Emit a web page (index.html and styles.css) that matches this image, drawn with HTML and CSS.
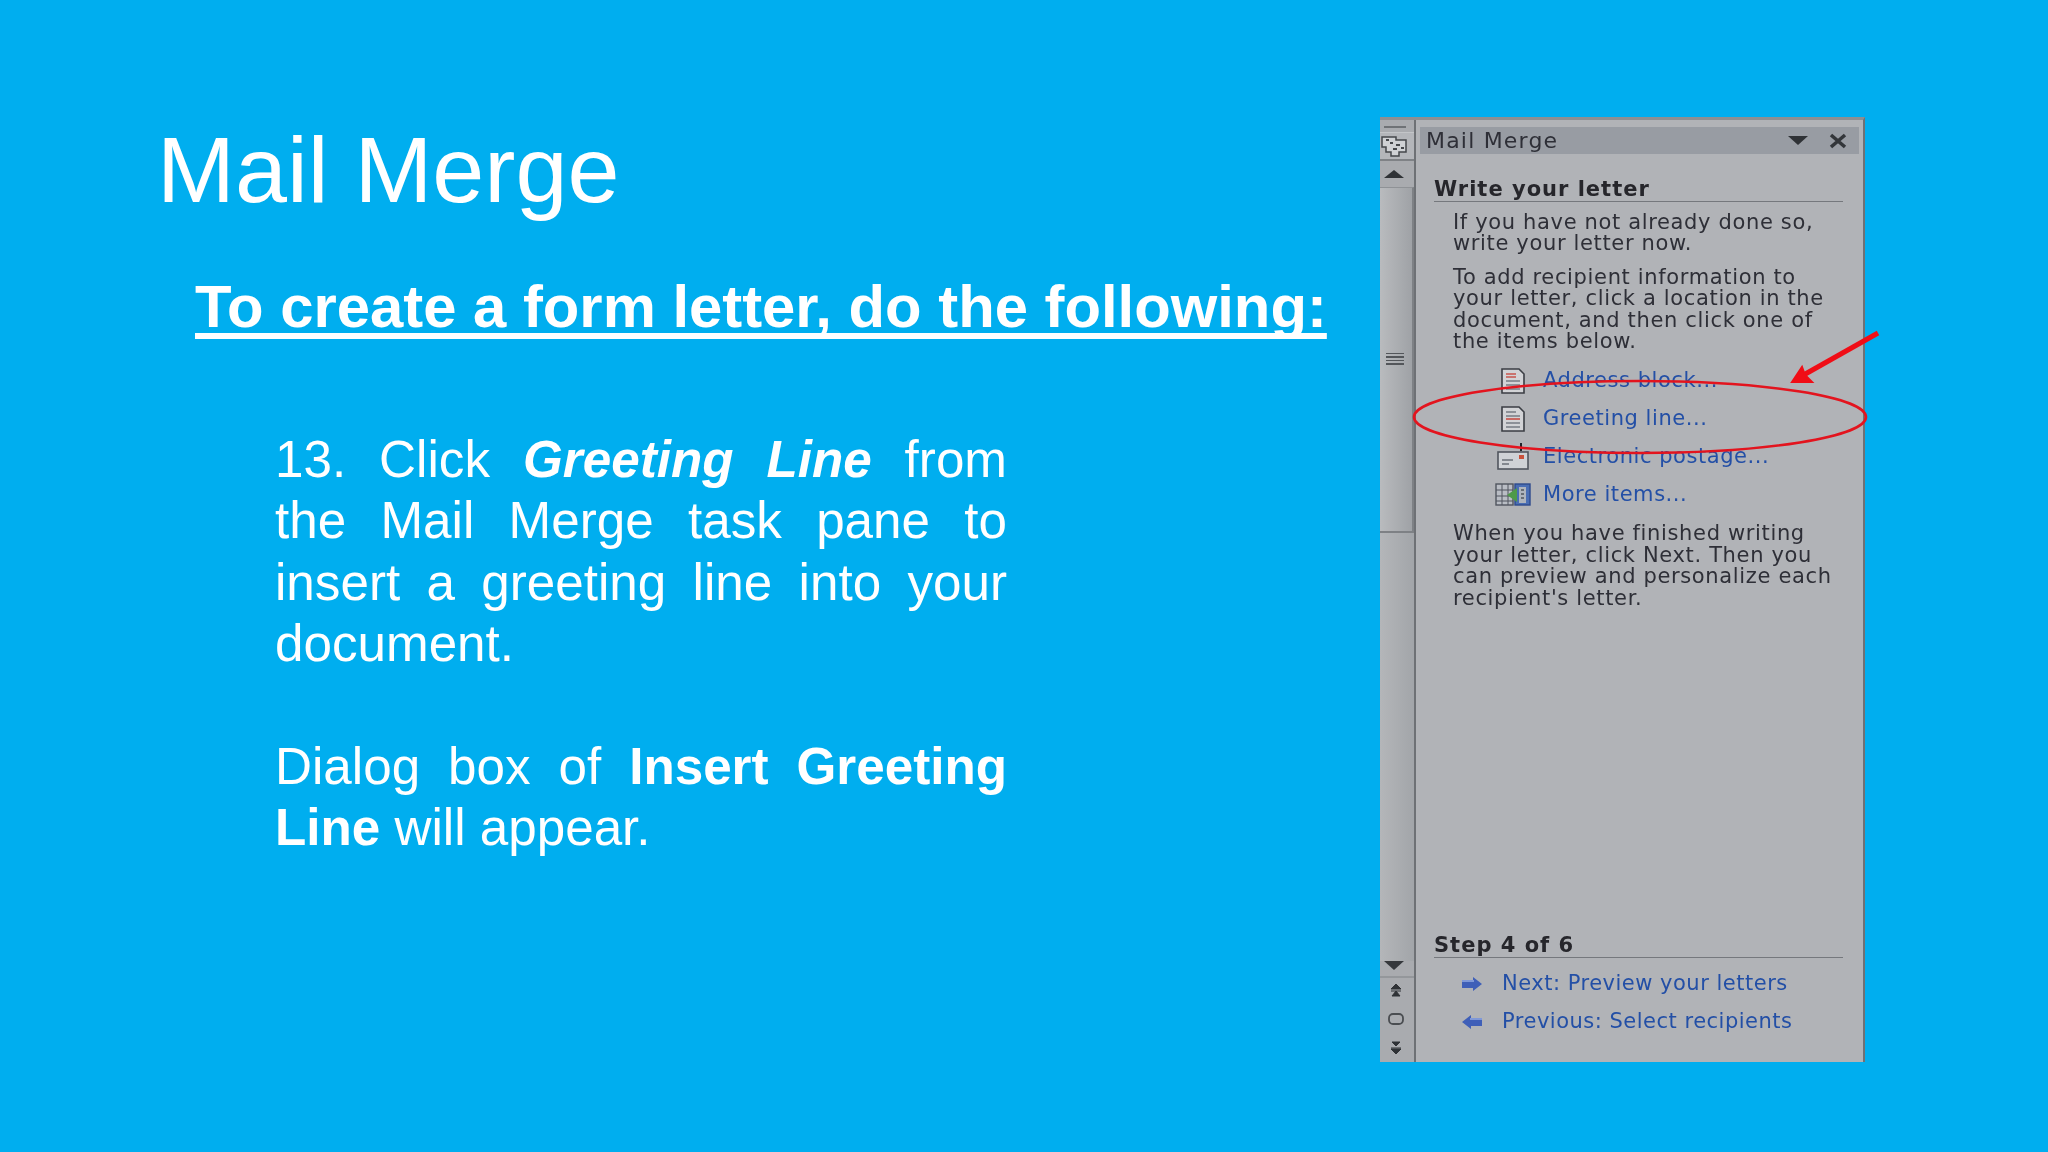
FILE: index.html
```html
<!DOCTYPE html>
<html lang="en">
<head>
	<meta charset="UTF-8">
	<title>Mail Merge</title>
	<link rel="stylesheet" href="styles.css">
</head>
<body>
	<div class="slide">
		<div class="copy">
			<h1>Mail Merge</h1>
			<h2>To create a form letter, do the following:</h2>
			<p class="step">13. Click <b><i>Greeting Line</i></b> from the Mail Merge task pane to insert a greeting line into your document.</p>
			<p class="step step-2">Dialog box of <b>Insert Greeting Line</b> will appear.</p>
		</div>

		<div class="pane">
			<div class="strip">
				<div class="grip"></div>
				<div class="tool">
					<svg width="30" height="24" viewBox="0 0 30 24">
						<path d="M2 3h14v3h10v12h-7v4h-8v-4H6v-5H2z" fill="#cfd1d4" stroke="#44474b" stroke-width="1.5"/>
						<path d="M6 6h3M10 9h3M16 11h4M13 15h4M21 14h3" stroke="#44474b" stroke-width="1.8"/>
					</svg>
				</div>
				<div class="tri tri-up"></div>
				<div class="thumb">
					<div class="thumb-lines"></div>
				</div>
				<div class="strip-fill"></div>
				<div class="tri tri-down"></div>
				<div class="strip-btns">
					<svg width="16" height="14" viewBox="0 0 16 14"><path d="M8 1l5 5H3zM3 8h10M8 8l4 5H4z" fill="#2f3236" stroke="#2f3236"/></svg>
					<svg width="18" height="14" viewBox="0 0 18 14"><rect x="2" y="2" width="14" height="10" rx="4" fill="none" stroke="#4a4d51" stroke-width="1.8"/></svg>
					<svg width="16" height="14" viewBox="0 0 16 14"><path d="M4 1h8L8 5zM3 7h10M3 8l5 5 5-5z" fill="#2f3236" stroke="#2f3236"/></svg>
				</div>
			</div>

			<div class="main">
				<div class="titlebar">
					<span>Mail Merge</span>
					<div class="tri tri-title"></div>
					<svg class="close" width="20" height="16" viewBox="0 0 20 16"><path d="M3 2l14 12M17 2L3 14" stroke="#33363a" stroke-width="3.6"/></svg>
				</div>

				<div class="section">
					<h3>Write your letter</h3>
					<p class="first">If you have not already done so, write your letter now.</p>
					<p>To add recipient information to your letter, click a location in the document, and then click one of the items below.</p>
					<ul class="items">
						<li>
							<svg width="28" height="26" viewBox="0 0 28 26">
								<path d="M3 1h17l5 5v19H3z" fill="#d2d3d6" stroke="#3b3e44" stroke-width="1.6"/>
								<path d="M7 6h10M7 9h10" stroke="#c8554d" stroke-width="1.5"/>
								<path d="M7 13h14M7 17h14M7 21h14" stroke="#777c84" stroke-width="1.5"/>
							</svg>
							<a>Address block...</a>
						</li>
						<li>
							<svg width="28" height="26" viewBox="0 0 28 26">
								<path d="M3 1h17l5 5v19H3z" fill="#d2d3d6" stroke="#3b3e44" stroke-width="1.6"/>
								<path d="M7 6h10M7 10h14" stroke="#777c84" stroke-width="1.5"/>
								<path d="M7 13h14" stroke="#c8554d" stroke-width="1.7"/>
								<path d="M7 17h14M7 21h14" stroke="#777c84" stroke-width="1.5"/>
							</svg>
							<a>Greeting line...</a>
						</li>
						<li>
							<svg width="32" height="28" viewBox="0 0 32 28">
								<path d="M24 0v8" stroke="#20232a" stroke-width="2"/>
								<rect x="1" y="9" width="30" height="17" fill="#cfd2d6" stroke="#50555e" stroke-width="1.6"/>
								<rect x="22" y="12" width="5" height="4" fill="#c9503a"/>
								<path d="M5 17h11M5 21h7" stroke="#6b7078" stroke-width="1.6"/>
							</svg>
							<a>Electronic postage...</a>
						</li>
						<li>
							<svg width="36" height="24" viewBox="0 0 36 24">
								<rect x="1" y="1" width="17" height="21" fill="#b9bdc4" stroke="#50555e" stroke-width="1.4"/>
								<path d="M1 7h17M1 13h17M1 18h17M7 1v21M13 1v21" stroke="#50555e"/>
								<rect x="20" y="1" width="15" height="21" fill="#4a6eb4" stroke="#2e4a8c" stroke-width="1.4"/>
								<rect x="24" y="4" width="7" height="16" fill="#aeb4bd"/>
								<path d="M26 7h3M26 11h3M26 15h3" stroke="#50555e" stroke-width="1.4"/>
								<path d="M22 5L12 12l10 7z" fill="#4e9a48"/>
							</svg>
							<a>More items...</a>
						</li>
					</ul>
					<p>When you have finished writing your letter, click Next. Then you can preview and personalize each recipient's letter.</p>
				</div>

				<div class="section">
					<h3>Step 4 of 6</h3>
					<div class="nav">
						<svg width="22" height="16" viewBox="0 0 22 16"><path d="M1 4h11V1l9 7-9 7v-3H1z" fill="#3f5fb8"/><path d="M1 5h12" stroke="#7f98d8" stroke-width="2"/></svg>
						<a>Next: Preview your letters</a>
					</div>
					<div class="nav">
						<svg width="22" height="16" viewBox="0 0 22 16"><path d="M21 4H10V1L1 8l9 7v-3h11z" fill="#3f5fb8"/><path d="M21 5H9" stroke="#7f98d8" stroke-width="2"/></svg>
						<a>Previous: Select recipients</a>
					</div>
				</div>
			</div>
		</div>

		<svg class="marks" width="500" height="150" viewBox="0 0 500 150">
			<ellipse cx="240" cy="97" rx="226" ry="36" fill="none" stroke="#e3141e" stroke-width="2.6"/>
			<path d="M478 13L400 57" stroke="#f00d16" stroke-width="5"/>
			<path d="M392 62l10-15 3 8 7 7z" fill="#f00d16" stroke="#f00d16" stroke-width="2"/>
		</svg>
	</div>
</body>
</html>
```

FILE: styles.css
```css
body,h1,h2,h3,p,ul,li{
	margin:0;
	padding:0;
}
ul{
	list-style-type:none;
}
body{
	background:#00aeef;
	font-family:"Liberation Sans",Arial,sans-serif;
}
.slide{
	position:relative;
	display:flex;
	width:2048px;
	height:1152px;
	overflow:hidden;
	background:#00aeef;
	color:#fff;
}

/* left side */
.copy{
	width:1380px;
	flex:none;
	padding:116px 0 0 157px;
	box-sizing:border-box;
}
h1{
	font-size:93.5px;
	font-weight:400;
	line-height:107px;
}
h2{
	margin:49px 0 0 38px;
	font-size:59.8px;
	font-weight:700;
	line-height:69px;
	white-space:nowrap;
	text-decoration:underline;
	text-decoration-thickness:6px;
	text-underline-offset:6px;
	text-decoration-skip-ink:none;
}
.step{
	width:732px;
	margin:88px 0 0 118px;
	font-size:51.2px;
	line-height:61.4px;
	text-align:justify;
}
.step-2{
	margin-top:61px;
}

/* task pane */
.pane{
	display:flex;
	width:485px;
	height:945px;
	margin-top:117px;
	flex:none;
	box-sizing:border-box;
	border-top:3px solid #8c8f92;
	border-right:2px solid #6e7175;
	background:#b1b3b7;
	color:#2e2f37;
	font-family:"DejaVu Sans",Verdana,sans-serif;
	font-size:21px;
	line-height:21.5px;
	filter:blur(.5px);
}
.strip{
	display:flex;
	flex-direction:column;
	width:34px;
	flex:none;
	border-right:2px solid #6e7175;
	background:#a9abaf;
}
.grip{
	height:2px;
	margin:6px 8px 0 4px;
	background:#6f7276;
}
.tool{
	height:29px;
	margin-top:4px;
	padding-top:1px;
	box-sizing:border-box;
	border-top:1px solid #c3c5c8;
	border-bottom:2px solid #7f8286;
	background:#b4b6ba;
}
.tri{
	width:0;
	height:0;
	border-left:10px solid transparent;
	border-right:10px solid transparent;
}
.tri-up{
	margin:9px 0 0 4px;
	border-bottom:8px solid #2f3236;
}
.tri-down{
	margin:0 0 0 4px;
	border-top:9px solid #35383c;
}
.thumb{
	display:flex;
	align-items:center;
	justify-content:center;
	height:346px;
	margin-top:9px;
	box-sizing:border-box;
	border-top:1px solid #8f9296;
	border-right:2px solid #7e8185;
	border-bottom:2px solid #7e8185;
	background:linear-gradient(90deg,#b9bbbe,#9fa2a6);
}
.thumb-lines{
	width:18px;
	height:13px;
	margin-left:-2px;
	background:repeating-linear-gradient(#53565a 0 1.5px,transparent 1.5px 3.5px);
}
.strip-fill{
	flex:1;
	background:linear-gradient(90deg,#b4b6b9,#a2a5a9);
}
.strip-btns{
	display:flex;
	flex-direction:column;
	align-items:center;
	gap:15px;
	padding:5px 3px 7px 0;
	margin-top:6px;
	border-top:2px solid #94979b;
}
.main{
	display:flex;
	flex-direction:column;
	flex:1;
	padding:7px 4px 0;
	min-width:0;
}
.titlebar{
	display:flex;
	align-items:center;
	height:27px;
	padding:0 11px 0 6px;
	background:#989ca3;
	font-size:22px;
	letter-spacing:1.2px;
}
.titlebar span{
	flex:1;
}
.tri-title{
	margin-right:20px;
	border-top:9px solid #2f3236;
}
.section{
	padding:0 16px 0 14px;
	letter-spacing:.65px;
}
.section:nth-child(2){
	flex:1;
	padding-top:25px;
}
.section:nth-child(3){
	height:127px;
}
h3{
	border-bottom:1.5px solid #75787d;
	font-size:21px;
	font-weight:700;
	letter-spacing:1px;
	color:#26262b;
}
.section p{
	margin:12px 6px 0 19px;
}
.section p.first{
	margin-top:10px;
}
.items{
	margin-top:9px;
	letter-spacing:.55px;
}
.section .items + p{
	margin-top:9px;
}
.items li{
	display:flex;
	align-items:center;
	height:38.2px;
	padding-left:61px;
}
.items svg{
	width:36px;
	margin-right:12px;
	flex:none;
}
a{
	color:#234fa6;
}
.nav{
	display:flex;
	align-items:center;
	height:38px;
	padding-left:27px;
	letter-spacing:.5px;
}
h3 + .nav{
	margin-top:7px;
}
.nav svg{
	margin-right:19px;
}

/* red marks over the pane */
.marks{
	position:absolute;
	left:1400px;
	top:320px;
}
```
